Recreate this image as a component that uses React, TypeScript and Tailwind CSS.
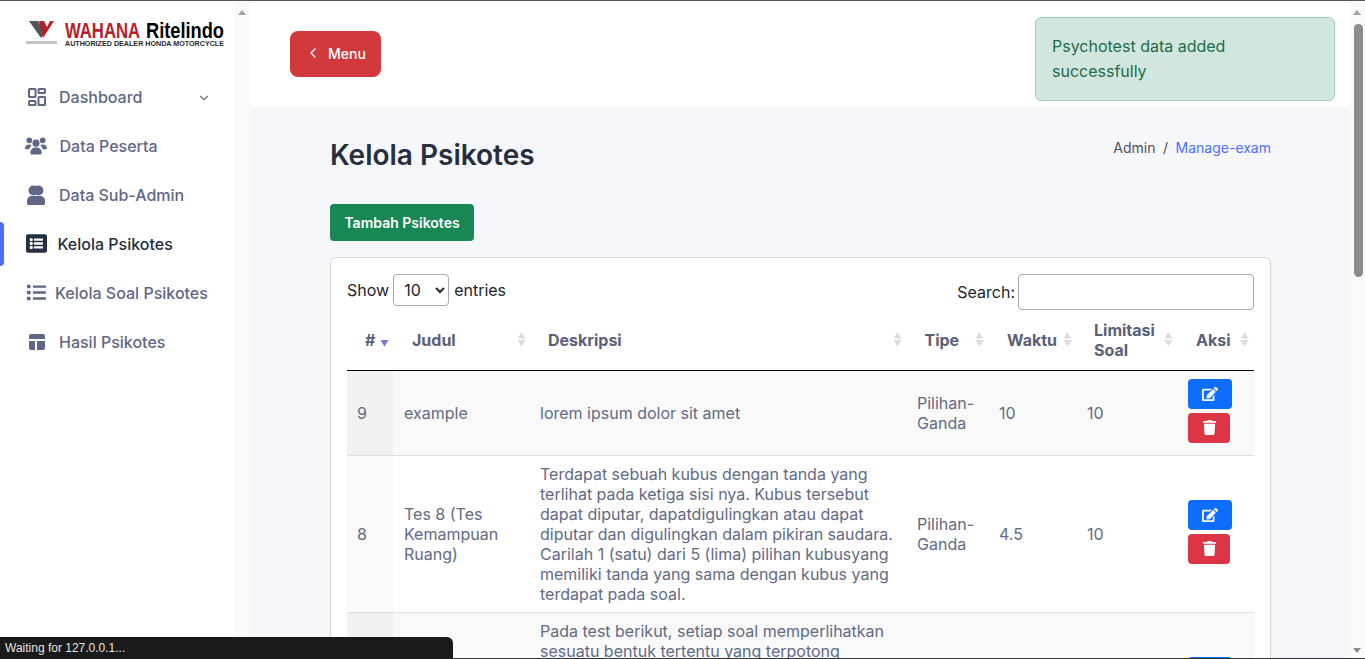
import { ChevronDown, ChevronLeft } from 'lucide-react';
import { FaEdit, FaList, FaListAlt, FaTrash } from 'react-icons/fa';

const Logo = () => (
  <svg width="200" height="26" viewBox="0 0 200 26" className="overflow-visible font-['Liberation_Sans',sans-serif] font-bold">
    <path d="M4 0h9l7 11-4 6z" fill="#555558" />
    <path d="M14 0h5l3 6 3-6h4L18 17z" fill="#b5202a" />
    <rect x="1" y="20" width="31" height="3" fill="#c4c4c4" />
    <text x="40" y="17" fontSize="22" fill="#b5202a" textLength="75" lengthAdjust="spacingAndGlyphs">WAHANA</text>
    <text x="121" y="17" fontSize="22" fill="#000000" textLength="78" lengthAdjust="spacingAndGlyphs">Ritelindo</text>
    <text x="40" y="24.500" fontSize="8" fill="#2a2a2a" textLength="159" lengthAdjust="spacingAndGlyphs">AUTHORIZED DEALER HONDA MOTORCYCLE</text>
  </svg>
);

const DashboardIcon = () => (
  <svg width="20" height="20" viewBox="0 0 20 20" fill="none" stroke="currentColor" strokeWidth="2">
    <rect x="2" y="2" width="6.5" height="8" rx="0.5" />
    <rect x="11.5" y="2" width="6.5" height="4" rx="0.5" />
    <rect x="2" y="14" width="6.5" height="4" rx="0.5" />
    <rect x="11.5" y="10" width="6.5" height="8" rx="0.5" />
  </svg>
);

const UsersIcon = () => (
  <svg width="23" height="20" viewBox="0 0 23 20" fill="currentColor">
    <circle cx="4.5" cy="4" r="3" />
    <circle cx="18.5" cy="4" r="3" />
    <circle cx="11.5" cy="7" r="3.7" />
    <path d="M0 13c0-3 2-4.600 4.500-4.600 1.200 0 2 .3 2.700.8C5.600 10.300 4.900 11.800 4.700 13.500H1z" />
    <path d="M23 13c0-3-2-4.600-4.500-4.600-1.200 0-2 .3-2.700.8 1.600 1.100 2.300 2.600 2.500 4.300H22z" />
    <path d="M5.500 17c0-3.500 2.500-5.500 6-5.500s6 2 6 5.500c0 1-.7 2-2 2h-8c-1.300 0-2-1-2-2z" />
  </svg>
);

const SubAdminIcon = () => (
  <svg width="20" height="20" viewBox="0 0 20 20" fill="currentColor">
    <circle cx="7.500" cy="5.500" r="5" />
    <circle cx="12.500" cy="5.500" r="5" />
    <path d="M1 16c0-3 2-5 5-5h8c3 0 5 2 5 5v2.500c0 .8-.7 1.500-1.500 1.500h-15C1.700 20 1 19.300 1 18.500z" />
  </svg>
);

const LayoutIcon = () => (
  <svg width="20" height="20" viewBox="0 0 20 20" fill="currentColor">
    <path d="M4 2h12a2 2 0 0 1 2 2v3H2V4a2 2 0 0 1 2-2z" />
    <path d="M2 9h6v9H4a2 2 0 0 1-2-2z" />
    <path d="M10 9h8v7a2 2 0 0 1-2 2h-6z" />
  </svg>
);

const SortIcon = ({ active }: { active?: boolean }) => (
  <svg width="9" height="15" viewBox="0 0 9 15" className="shrink-0">
    {!active && <path d="M4.500 0 8.500 6.500H.5z" fill="#dcdcdc" />}
    <path d="M.5 8h8L4.500 14.500z" fill={active ? '#7678d8' : '#dcdcdc'} />
  </svg>
);

const menuItems = [
  { label: 'Dashboard', icon: <DashboardIcon />, gap: 'gap-[11px] pl-[26px]', chevron: true },
  { label: 'Data Peserta', icon: <UsersIcon />, gap: 'gap-[12.5px] pl-[25px]' },
  { label: 'Data Sub-Admin', icon: <SubAdminIcon />, gap: 'gap-[12px] pl-[25px]' },
  { label: 'Kelola Psikotes', icon: <FaListAlt size={21} />, gap: 'gap-[10.5px] pl-[25px]', active: true },
  { label: 'Kelola Soal Psikotes', icon: <FaList size={19} />, gap: 'gap-[8px] pl-[25px]' },
  { label: 'Hasil Psikotes', icon: <LayoutIcon />, gap: 'gap-[11px] pl-[26px]' },
];

const columns = [
  { label: '#', width: 'w-[46px]', pad: 'pl-[18px] pr-[4px]', active: true },
  { label: 'Judul', width: 'w-[137px]', pad: 'pl-[19px] pr-[4px]' },
  { label: 'Deskripsi', width: 'w-[376px]', pad: 'pl-[18px] pr-[4px]' },
  { label: 'Tipe', width: 'w-[83px]', pad: 'pl-[18.5px] pr-[5px]' },
  { label: 'Waktu', width: 'w-[88px]', pad: 'pl-[18px] pr-[5px]' },
  { label: 'Limitasi Soal', width: 'w-[101px]', pad: 'pl-[17px] pr-[5px]' },
  { label: 'Aksi', width: 'w-[76px]', pad: 'pl-[18px] pr-[5px]' },
];

const rows = [
  { no: '9', title: 'example', desc: 'lorem ipsum dolor sit amet', type: 'Pilihan-Ganda', time: '10', limit: '10' },
  {
    no: '8',
    title: 'Tes 8 (Tes Kemampuan Ruang)',
    desc: 'Terdapat sebuah kubus dengan tanda yang terlihat pada ketiga sisi nya. Kubus tersebut dapat diputar, dapatdigulingkan atau dapat diputar dan digulingkan dalam pikiran saudara. Carilah 1 (satu) dari 5 (lima) pilihan kubusyang memiliki tanda yang sama dengan kubus yang terdapat pada soal.',
    type: 'Pilihan-Ganda',
    time: '4.5',
    limit: '10',
  },
  {
    no: '7',
    title: 'Tes 7',
    desc: 'Pada test berikut, setiap soal memperlihatkan sesuatu bentuk tertentu yang terpotong menjadi beberapa bagian. Carilah di antara pilihan yang tersedia bentuk yang dapat disusun dari potongan tersebut dan tandai jawaban yang menurut saudara paling tepat pada lembar soal.',
    type: 'Pilihan-Ganda',
    time: '6',
    limit: '10',
  },
];

export default function App() {
  return (
    <div className="relative h-screen overflow-hidden border-t border-[#555555] bg-white font-['Inter',sans-serif] text-[16px]">
      <div className="flex h-full">
        <aside className="flex w-[250px] shrink-0">
          <div className="relative w-[235px]">
            <div className="h-[71px] pl-[25px] pt-[20px]">
              <Logo />
            </div>
            <nav>
              {menuItems.map((item) => (
                <div
                  key={item.label}
                  className={`relative flex h-[49px] items-center font-medium ${item.gap} ${item.active ? 'text-[#252f40]' : 'text-[#5e6785]'}`}
                >
                  {item.active && <span className="absolute left-0 top-[2.5px] h-[44px] w-[4px] rounded-r bg-[#4c6fff]" />}
                  <span className="flex w-[22px] justify-center">{item.icon}</span>
                  <span>{item.label}</span>
                  {item.chevron && <ChevronDown size={14} className="absolute left-[197px] top-[19px] text-[#6b7280]" />}
                </div>
              ))}
            </nav>
          </div>
          <div className="relative w-[15px] bg-[#fafafb]">
            <span className="absolute left-[3px] top-[9px] h-0 w-0 border-x-[4.5px] border-b-[5px] border-x-transparent border-b-[#a3a3a3]" />
          </div>
        </aside>

        <main className="flex min-w-0 flex-1 flex-col bg-[#f6f7fa]">
          <header className="flex h-[106px] shrink-0 justify-between bg-white pl-[40px] pr-[15px]">
            <button className="mt-[30px] flex h-[46px] w-[91px] items-center gap-[7px] rounded-lg bg-[#d2393c] pb-[2px] pl-[15px] text-[14px] font-medium text-white">
              <ChevronLeft size={16} />
              Menu
            </button>
            <div className="mt-[16px] h-[84px] w-[300px] rounded-md border border-[#a3cfbb] bg-[#d1e7dd] px-4 py-4 leading-[25px] text-[#1d6b4c]">
              Psychotest data added successfully
            </div>
          </header>

          <div className="pl-[80px] pr-[79px]">
            <div className="flex h-[97px] items-start justify-between">
              <h1 className="mt-[29px] text-[28px] font-semibold leading-[38px] text-[#252f40]">Kelola Psikotes</h1>
              <div className="mt-[31px] flex gap-[7.5px] text-[14px] leading-[20px] text-[#4a5068]">
                <span>Admin</span>
                <span>/</span>
                <span className="text-[#4c6fff]">Manage-exam</span>
              </div>
            </div>
            <button className="h-[37px] w-[144px] rounded bg-[#198754] text-[14px] font-semibold text-white">Tambah Psikotes</button>

            <section className="mt-[16px] rounded-md border border-[#d4d4d4] bg-white px-4 pt-4">
              <div className="flex justify-between text-[#212529]">
                <div className="flex h-[32px] items-center gap-[4px]">
                  <span>Show</span>
                  <select className="h-[32px] w-[56px] rounded border border-[#a8a8a8] bg-white pl-[6px] text-[#212529]">
                    <option>10</option>
                  </select>
                  <span className="ml-px">entries</span>
                </div>
                <div className="flex items-center gap-[3px]">
                  <span>Search:</span>
                  <input className="h-[36px] w-[236px] rounded border border-[#a8a8a8] bg-white" />
                </div>
              </div>

              <table className="w-[907px] table-fixed border-collapse">
                <thead>
                  <tr className="h-[60px] border-b border-black text-left font-bold text-[#5a6178]">
                    {columns.map((col) => (
                      <th key={col.label} className={`${col.width} p-0`}>
                        <div className={`flex items-center justify-between leading-[20px] ${col.pad}`}>
                          <span>{col.label}</span>
                          <SortIcon active={col.active} />
                        </div>
                      </th>
                    ))}
                  </tr>
                </thead>
                <tbody className="text-[#626a85]">
                  {rows.map((row, i) => (
                    <tr key={row.no} className={`border-b border-[#dedede] leading-[20px] ${i % 2 === 0 ? 'bg-[#f9f9f9]' : 'bg-white'}`}>
                      <td className={`px-[10px] py-2 ${i % 2 === 0 ? 'bg-[#f1f1f1]' : 'bg-[#fafafa]'}`}>{row.no}</td>
                      <td className="px-[10px] py-2 pl-[11px]">{row.title}</td>
                      <td className="px-[10px] py-2">{row.desc}</td>
                      <td className="py-2 pl-[11px] pr-[10px]">{row.type}</td>
                      <td className="px-[10px] py-2">{row.time}</td>
                      <td className="px-[10px] py-2">{row.limit}</td>
                      <td className="px-[10px] pb-3 pt-2">
                        <div className="flex flex-col items-start gap-[4px]">
                          <button className="flex h-[30px] w-[44px] items-center justify-center rounded bg-[#0d6efd] text-white">
                            <FaEdit size={16} />
                          </button>
                          <button className="flex h-[30px] w-[42px] items-center justify-center rounded bg-[#dc3545] text-white">
                            <FaTrash size={15} />
                          </button>
                        </div>
                      </td>
                    </tr>
                  ))}
                </tbody>
              </table>
            </section>
          </div>
        </main>

        <div className="relative w-[15px] shrink-0 bg-[#fafafb]">
          <span className="absolute left-[3px] top-[9px] h-0 w-0 border-x-[4.5px] border-b-[5px] border-x-transparent border-b-[#a3a3a3]" />
          <span className="absolute left-[4px] top-[23px] h-[253px] w-[9px] rounded-full bg-[#8c8c8c]" />
          <span className="absolute bottom-[6px] left-[3px] h-0 w-0 border-x-[4.5px] border-t-[5px] border-x-transparent border-t-[#8a8a8a]" />
        </div>
      </div>

      <div className="absolute bottom-0 left-[453px] right-0 h-px bg-[#333333]" />
      <div className="absolute bottom-0 left-0 flex h-[22px] w-[453px] items-center rounded-tr-md bg-[#1a1a1a] pl-[5px] font-['Liberation_Sans',sans-serif] text-[12px] text-[#e4e4e4]">
        Waiting for 127.0.0.1...
      </div>
    </div>
  );
}
